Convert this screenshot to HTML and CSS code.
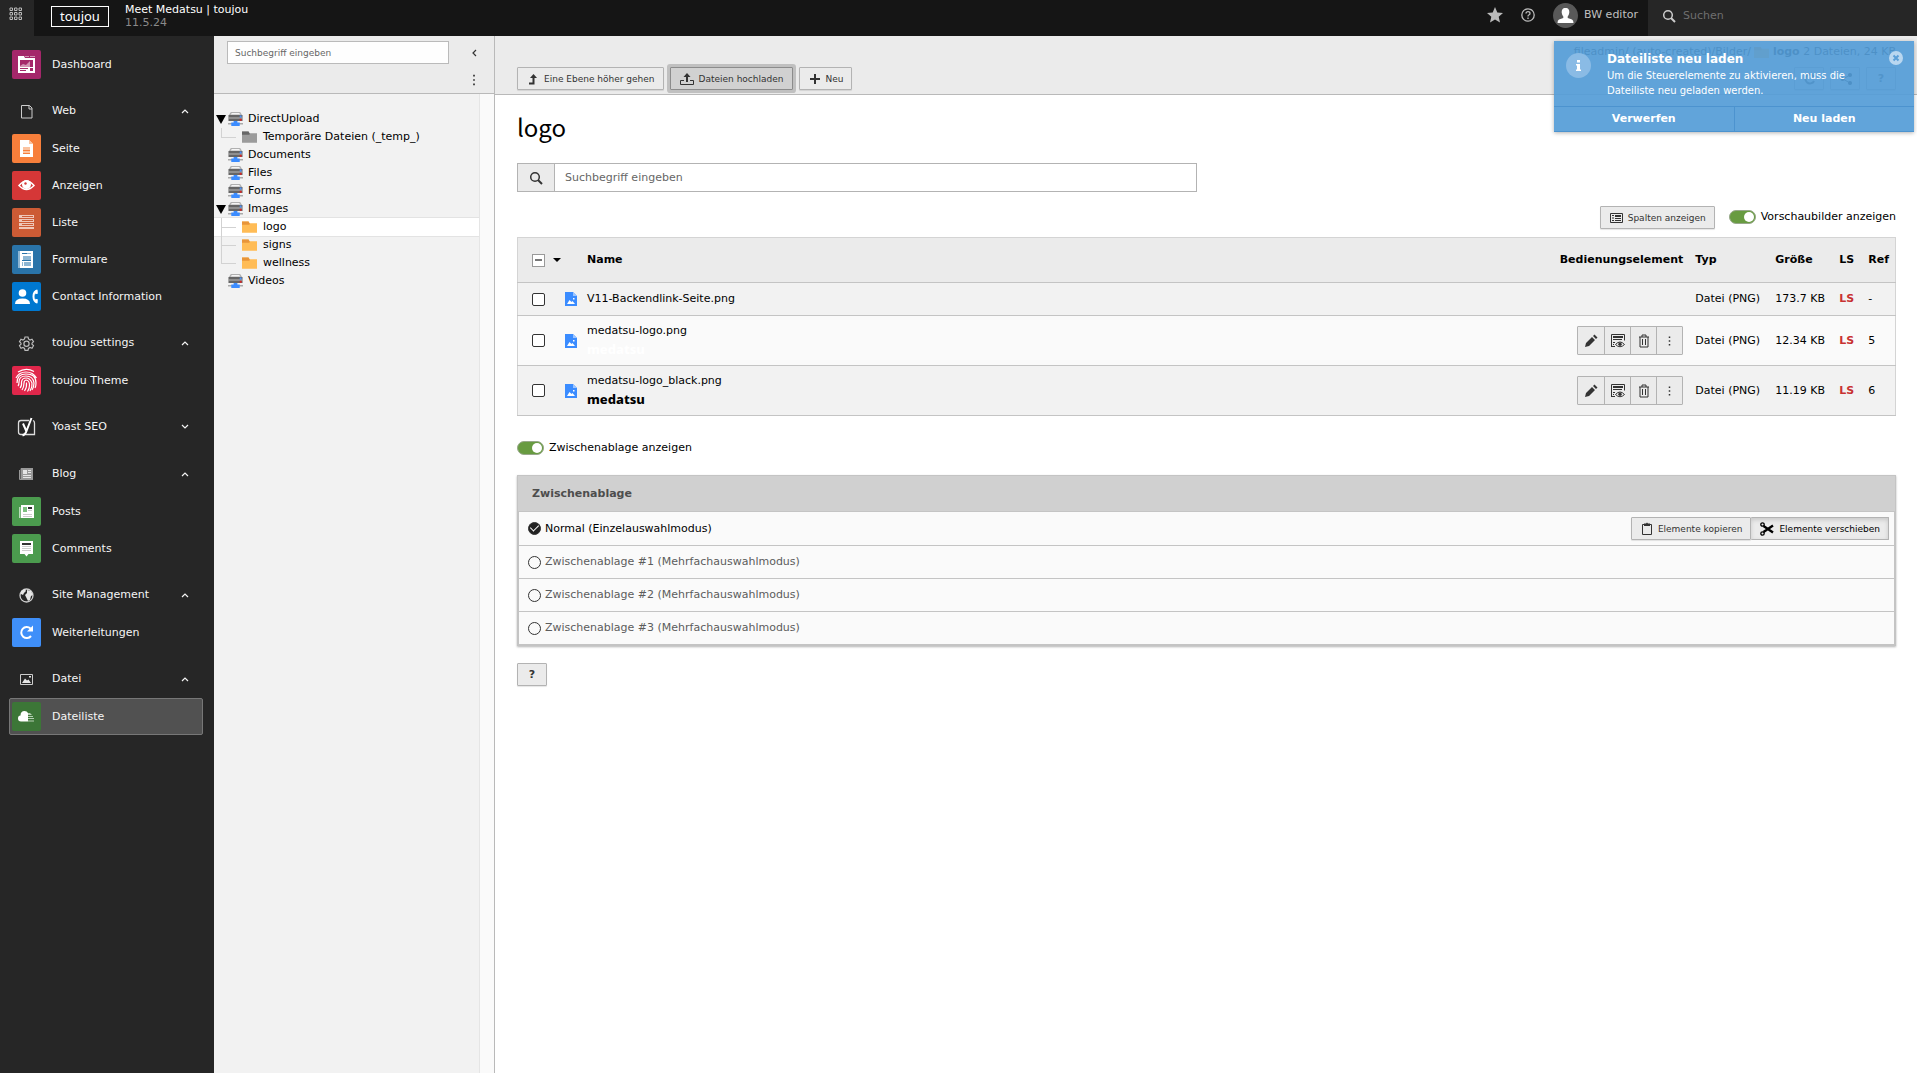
FILE: index.html
```html
<!DOCTYPE html>
<html lang="de">
<head>
    <meta charset="UTF-8">
    <meta name="viewport" content="width=device-width, initial-scale=1.0">
    <title>Meet Medatsu | toujou</title>
    <link rel="stylesheet" href="styles.css">
</head>
<body>
    <!-- Icons used more than once -->
    <svg class="sprite" aria-hidden="true">
        <symbol id="chevron" viewBox="0 0 8 8"><path d="M1 6l3-3 3 3" fill="none" stroke="currentColor" stroke-width="1.2"/></symbol>
        <symbol id="mount" viewBox="0 0 16 14" preserveAspectRatio="none">
            <path d="M3 0h10l2 3H1z" fill="#b0b0b0"/><path d="M4 1h8l1 1.500H3z" fill="#f5f5f5"/>
            <path d="M.5 3h15v6H.5z" fill="#666"/><path d="M.5 5.500h15v1H.5z" fill="#bbb"/>
            <path d="M12.500 3.500h2v2h-2z" fill="#4b93ff"/><path d="M12.500 6.800h2v2h-2z" fill="#d22"/>
            <path d="M0 11h16v1.500H0z" fill="#aaa"/><path d="M6 9h4v1.500h2.500V14h-9v-3.500H6z" fill="#3b8cff"/>
        </symbol>
        <symbol id="folder" viewBox="0 0 16 14">
            <path d="M0 1h7l1 2h8v10H0z" fill="#ffbc56"/><path d="M0 1h7l1 2v1.500H0z" fill="#e8953a"/>
        </symbol>
        <symbol id="folder-temp" viewBox="0 0 16 14">
            <path d="M0 1h7l1 2h8v10H0z" fill="#9b9b9b"/><path d="M0 1h7l1 2v1.500H0z" fill="#666"/>
        </symbol>
        <symbol id="image-file" viewBox="0 0 12 14">
            <path d="M0 0h8l4 4v10H0z" fill="#3b8cff"/><path d="M8 0l4 4H8z" fill="#9cc5ff"/>
            <path d="M2 12l2.500-4 2 2 1-1 2.500 3z" fill="#fff"/><path d="M8 6h1.500v1.500H8z" fill="#fff"/>
        </symbol>
        <symbol id="search" viewBox="0 0 14 14"><circle cx="6" cy="6" r="4.300" fill="none" stroke="currentColor" stroke-width="1.500"/><path d="M9 9l4 4" stroke="currentColor" stroke-width="2"/></symbol>
        <symbol id="pencil" viewBox="0 0 14 14"><path d="M1 13l1-4 6-6 3 3-6 6zM9 2l1.500-1.500 3 3L12 5z" fill="currentColor"/></symbol>
        <symbol id="view-page" viewBox="0 0 14 14">
            <path d="M.5 13V.5h13v6M.5 12.500H4" fill="none" stroke="currentColor"/><path d="M2 2h10v2H2zM2 5h9v1H2zM2 8h2v1H2zM2 10h1v1H2z" fill="currentColor"/>
            <path d="M4.500 10.500q4.500-5 9 0-4.500 4.500-9 0z" fill="#eee" stroke="currentColor"/><circle cx="9" cy="10.200" r="1.700" fill="currentColor"/>
        </symbol>
        <symbol id="trash" viewBox="0 0 12 14"><path d="M1 3h10M4 3V1h4v2M2 3v10h8V3M4.500 5v6M7.500 5v6" fill="none" stroke="currentColor"/></symbol>
        <symbol id="dots" viewBox="0 0 4 14"><path d="M1 1h2v2H1zM1 6h2v2H1zM1 11h2v2H1z" fill="currentColor"/></symbol>
    </svg>

    <header class="topbar">
        <button class="topbar-toggle" aria-label="Menü">
            <svg width="14" height="14" viewBox="0 0 14 14"><path d="M1 1h2.500v2.500H1zM5.500 1H8v2.500H5.500zM10 1h2.500v2.500H10zM1 5.500h2.500V8H1zM5.500 5.500H8V8H5.500zM10 5.500h2.500V8H10zM1 10h2.500v2.500H1zM5.500 10H8v2.500H5.500zM10 10h2.500v2.500H10z" fill="none" stroke="#bbb"/></svg>
        </button>
        <a href="#" class="topbar-logo">toujou</a>
        <div class="topbar-site">
            <span>Meet Medatsu | toujou</span>
            <span class="topbar-version">11.5.24</span>
        </div>
        <div class="topbar-tools">
            <button aria-label="Lesezeichen"><svg width="16" height="16" viewBox="0 0 16 16"><path d="M8 0l2.300 5.400 5.700.5-4.300 3.800L13 15.500 8 12.500l-5 3 1.300-5.800L0 5.900l5.700-.5z" fill="#bbb"/></svg></button>
            <button aria-label="Hilfe"><svg width="14" height="14" viewBox="0 0 14 14"><circle cx="7" cy="7" r="6.200" fill="none" stroke="#bbb" stroke-width="1.300"/><path d="M5 5.500Q5 3.700 7 3.700t2 1.700Q9 6.500 7.800 7 7 7.400 7 8.500M7 9.500v1.500" fill="none" stroke="#bbb" stroke-width="1.300"/></svg></button>
            <button class="topbar-user">
                <svg width="25" height="25" viewBox="0 0 25 25"><circle cx="12.500" cy="12.500" r="12.500" fill="#595959"/><path d="M12.500 5c3 0 4 2 3.800 4.500-.2 2-1 3-1.600 4V15l4.300 1.500q1.500.7 1.500 3.500h-16q0-2.800 1.500-3.500l4.300-1.500v-1.500c-.6-1-1.400-2-1.600-4C8.500 7 9.500 5 12.500 5z" fill="#fff"/></svg>
                <span>BW editor</span>
            </button>
        </div>
        <label class="topbar-search">
            <svg width="14" height="14"><use href="#search"/></svg>
            <input type="search" placeholder="Suchen" aria-label="Suchen">
        </label>
    </header>

    <div class="scaffold">
        <nav class="modules">
            <div class="group">
                <a href="#" class="module"><svg class="tile" viewBox="0 0 29 29"><rect width="29" height="29" fill="#a4276a"/><path d="M6 6h6l1 2h10v15H6z" fill="#fff"/><path d="M13 6h4v1h-4zM18 6h5v1h-5z" fill="#d293b4"/><path d="M8 10h13v7H8z" fill="#a4276a"/><path d="M8 16l3-2 3 1 4-4v6H8z" fill="#d293b4"/><path d="M8 18h8v1H8zM8 20h6v1H8zM18 18h3v3h-3z" fill="#a4276a"/></svg>Dashboard</a>
            </div>
            <div class="group">
                <button class="module"><svg class="tile" viewBox="0 0 29 29"><path d="M9.500 8.500h8l2.500 2.500v10H9.500zM17 8.500V12h3" fill="none" stroke="#ccc"/></svg>Web<svg class="chevron"><use href="#chevron"/></svg></button>
                <a href="#" class="module"><svg class="tile" viewBox="0 0 29 29"><rect width="29" height="29" fill="#f77f3b"/><path d="M8 6h9l4 4v13H8z" fill="#fff"/><path d="M17 6l4 4h-4zM11 13h7v7h-7z" fill="#fbc3a0"/><path d="M11 16h7v1h-7zM11 19h7v1h-7z" fill="#f77f3b"/></svg>Seite</a>
                <a href="#" class="module"><svg class="tile" viewBox="0 0 29 29"><rect width="29" height="29" fill="#d53737"/><path d="M7 14.500q7.500-9 15 0-7.500 8-15 0z" fill="none" stroke="#fff" stroke-width="1.500"/><circle cx="14.500" cy="13.500" r="4.500" fill="#fff"/><circle cx="13.500" cy="12.500" r="1.200" fill="#d53737"/></svg>Anzeigen</a>
                <a href="#" class="module"><svg class="tile" viewBox="0 0 29 29"><rect width="29" height="29" fill="#cc5b35"/><path d="M7 7h15v3H7zM7 11h15v3H7zM7 15h15v3H7zM7 19h15v2H7z" fill="#efc7b9"/><path d="M10 8h11v1H10zM10 12h11v1H10zM10 16h11v1H10z" fill="#cc5b35"/></svg>Liste</a>
                <a href="#" class="module"><svg class="tile" viewBox="0 0 29 29"><rect width="29" height="29" fill="#2a74a9"/><path d="M6 6h3v17H6z" fill="#8db6d3"/><path d="M8 6h13v17H8z" fill="#fff"/><path d="M10 8h9v1h-9zM11 11h8v5h-8zM10 17h1v4h-1zM12 17h7v4h-7z" fill="#8db6d3"/><path d="M10 8h5v1h-5zM10 15h9v1h-9z" fill="#2a74a9"/></svg>Formulare</a>
                <a href="#" class="module"><svg class="tile" viewBox="0 0 29 29"><rect width="29" height="29" fill="#0078d0"/><circle cx="10.500" cy="11" r="3.800" fill="#fff"/><path d="M3 22q0-5.500 7.500-5.500T18 22z" fill="#fff"/><path d="M25.500 8.500q-4 1-4 6t4 6" fill="none" stroke="#fff" stroke-width="2"/><path d="M22.500 9l2.500-1.500 1 4-2.500.7zM22.500 20l2.500 1.500 1-4-2.500-.7z" fill="#fff"/></svg>Contact Information</a>
            </div>
            <div class="group">
                <button class="module"><svg class="tile" viewBox="0 0 29 29"><path d="M13 8h3l.5 2 1.500 1 2-.8 1.500 2.500-1.500 1.500v1l1.500 1.500-1.500 2.500-2-.8-1.500 1-.5 2h-3l-.5-2-1.500-1-2 .8-1.500-2.500L9 15.200v-1l-1.500-1.500L9 10.200l2 .8 1.500-1z" fill="none" stroke="#bbb" stroke-width="1.200"/><circle cx="14.500" cy="14.700" r="2.600" fill="none" stroke="#bbb" stroke-width="1.200"/></svg>toujou settings<svg class="chevron"><use href="#chevron"/></svg></button>
                <a href="#" class="module"><svg class="tile" viewBox="0 0 29 29"><rect width="29" height="29" fill="#e0274b"/><g fill="none" stroke="#fff" stroke-width="1.200"><path d="M6 6q8-5 16-.5M4 12Q7 6 14 6t10.500 6M5 17q0-9 9-9 10 0 10 9 0 3-1 5M6 20q1-1 1-4 0-6 7-6t8 7q0 4-2 7M8 22q2-2 1.500-6 .5-4 4.500-4t6 5q.5 4-2 8M10 24q2-3 2-7 0-3 2.500-3 3 1 3 5t-2 6.500M14.500 16.500q.5 5 -2 8.500"/></g></svg>toujou Theme</a>
            </div>
            <div class="group">
                <button class="module"><svg class="tile" viewBox="0 0 29 29"><path d="M17 7.500H9q-2.500 0-2.500 2.500v9q0 2.500 2.500 2.500h13.500V10q0-2-1.500-2.500" fill="none" stroke="#ddd" stroke-width="1.300"/><path d="M11 10.500l3.500 8M19.500 5L14.500 18q-1 3.500-4 4.500" fill="none" stroke="#fff" stroke-width="2"/></svg>Yoast SEO<svg class="chevron chevron-down"><use href="#chevron"/></svg></button>
            </div>
            <div class="group">
                <button class="module"><svg class="tile" viewBox="0 0 29 29"><path d="M7.500 10v9.500h13V8.500H9v11" fill="none" stroke="#999"/><path d="M9 8h12v12H9z" fill="#999"/><path d="M11 10h4v4h-4zM16 10h3v1h-3zM16 12h3v1h-3zM11 15h8v1h-8zM11 17h8v1h-8z" fill="#e5e5e5"/></svg>Blog<svg class="chevron"><use href="#chevron"/></svg></button>
                <a href="#" class="module"><svg class="tile" viewBox="0 0 29 29"><rect width="29" height="29" fill="#4b9b4e"/><path d="M7 10h1.500v11H7z" fill="#b9dbba"/><path d="M9 8h13v13H9z" fill="#fff"/><path d="M11 10h4v5h-4z" fill="#7cc07f"/><path d="M16 10h4v2h-4z" fill="#333"/><path d="M16 13h4v1h-4zM11 17h9v1h-9zM11 19h9v1h-9z" fill="#ccc"/></svg>Posts</a>
                <a href="#" class="module"><svg class="tile" viewBox="0 0 29 29"><rect width="29" height="29" fill="#4b9b4e"/><path d="M8 7h13v13h-4.500l-2 2.500-2-2.500H8z" fill="#fff"/><path d="M10 9h9v2h-9z" fill="#333"/><path d="M10 12h9v1h-9zM10 14h9v1h-9zM10 16h9v1h-9z" fill="#ccc"/></svg>Comments</a>
            </div>
            <div class="group">
                <button class="module"><svg class="tile" viewBox="0 0 29 29"><circle cx="14.500" cy="14.500" r="6.500" fill="none" stroke="#ccc" stroke-width="1.300"/><path d="M9 10l4-2 1 2-2 2-1 2-2-1zM15 9l4 1 2 4-2 1-1 4-2 1-2-4 -1-2 2-2z" fill="#e5e5e5"/></svg>Site Management<svg class="chevron"><use href="#chevron"/></svg></button>
                <a href="#" class="module"><svg class="tile" viewBox="0 0 29 29"><rect width="29" height="29" fill="#3f8ff9"/><path d="M19 18a5.500 5.500 0 1 1-.5-7.500" fill="none" stroke="#fff" stroke-width="2"/><path d="M21 7.500v6h-6z" fill="#fff"/></svg>Weiterleitungen</a>
            </div>
            <div class="group">
                <button class="module"><svg class="tile" viewBox="0 0 29 29"><path d="M8.500 9.500h12v10h-12z" fill="none" stroke="#ccc"/><path d="M10 18l3-4.500 2 2 1.500-1 2.500 3.500zM17 11h2v1.500h-2z" fill="#e5e5e5"/></svg>Datei<svg class="chevron"><use href="#chevron"/></svg></button>
                <a href="#" class="module module-active"><svg class="tile" viewBox="0 0 29 29"><rect width="29" height="29" fill="#3c7637"/><path d="M9 19.500q-3 0-3-3t2.500-3q0-4.500 4-4.500 2.500 0 3.500 2v8.500z" fill="#fff"/><path d="M16 11h2l2 2h-4zM16 14h5v1h-5zM16 16h6v1h-6zM16 18.500h6v1h-6z" fill="#b5ceb3"/></svg>Dateiliste</a>
            </div>
        </nav>

        <aside class="tree">
            <div class="tree-header">
                <div class="tree-row">
                    <input type="text" class="tree-search" placeholder="Suchbegriff eingeben" aria-label="Suchbegriff eingeben">
                    <button class="icon-btn" aria-label="Einklappen"><svg class="chevron chevron-left"><use href="#chevron"/></svg></button>
                </div>
                <button class="icon-btn tree-more" aria-label="Mehr"><svg width="4" height="12"><use href="#dots"/></svg></button>
            </div>
            <ul class="tree-list">
                <li><a href="#" class="node node-open"><svg class="node-icon"><use href="#mount"/></svg>DirectUpload</a>
                    <ul>
                        <li><a href="#" class="node"><svg class="node-icon"><use href="#folder-temp"/></svg>Temporäre Dateien (_temp_)</a></li>
                    </ul>
                </li>
                <li><a href="#" class="node"><svg class="node-icon"><use href="#mount"/></svg>Documents</a></li>
                <li><a href="#" class="node"><svg class="node-icon"><use href="#mount"/></svg>Files</a></li>
                <li><a href="#" class="node"><svg class="node-icon"><use href="#mount"/></svg>Forms</a></li>
                <li><a href="#" class="node node-open"><svg class="node-icon"><use href="#mount"/></svg>Images</a>
                    <ul>
                        <li><a href="#" class="node node-selected"><svg class="node-icon"><use href="#folder"/></svg>logo</a></li>
                        <li><a href="#" class="node"><svg class="node-icon"><use href="#folder"/></svg>signs</a></li>
                        <li><a href="#" class="node"><svg class="node-icon"><use href="#folder"/></svg>wellness</a></li>
                    </ul>
                </li>
                <li><a href="#" class="node"><svg class="node-icon"><use href="#mount"/></svg>Videos</a></li>
            </ul>
        </aside>

        <main class="content">
            <div class="docheader">
                <div class="docheader-path">fileadmin/ (auto-created)/Bilder/ <svg width="15" height="13"><use href="#folder"/></svg> <b>logo</b> 2 Dateien, 24 KB</div>
                <div class="docheader-buttons">
                    <button class="btn"><svg width="12" height="12" viewBox="0 0 12 12"><path d="M2 10.500h4.500V3" fill="none" stroke="currentColor" stroke-width="2"/><path d="M3 5l3.500-4L10 5z" fill="currentColor"/></svg>Eine Ebene höher gehen</button>
                    <button class="btn btn-focus"><svg width="14" height="12" viewBox="0 0 14 12"><path d="M4 7.500H.5v4h13v-4H10" fill="none" stroke="currentColor"/><path d="M6 9V4H3.500L7 0l3.500 4H8v5z" fill="currentColor"/></svg>Dateien hochladen</button>
                    <button class="btn"><svg width="12" height="12" viewBox="0 0 12 12"><path d="M6 1v10M1 6h10" stroke="currentColor" stroke-width="2"/></svg>Neu</button>
                    <div class="docheader-right">
                        <button class="btn" aria-label="Neu laden"><svg width="12" height="12" viewBox="0 0 12 12"><path d="M10 8a4.500 4.500 0 1 1 0-4" fill="none" stroke="currentColor" stroke-width="2"/></svg></button>
                        <button class="btn" aria-label="Teilen"><svg width="12" height="12" viewBox="0 0 12 12"><path d="M10 2L3 6l7 4" fill="none" stroke="currentColor"/><circle cx="10" cy="2" r="2"/><circle cx="2.500" cy="6" r="2"/><circle cx="10" cy="10" r="2"/></svg></button>
                        <button class="btn btn-help">?</button>
                    </div>
                </div>
            </div>

            <div class="body">
                <h1>logo</h1>
                <form class="search">
                    <button type="button" class="search-btn" aria-label="Suchen"><svg width="14" height="14"><use href="#search"/></svg></button>
                    <input type="text" placeholder="Suchbegriff eingeben" aria-label="Suchbegriff eingeben">
                </form>

                <div class="options">
                    <button class="btn"><svg width="13" height="12" viewBox="0 0 13 12"><path d="M.5 1.500h12v9H.5z" fill="none" stroke="currentColor"/><path d="M2 3h2v1H2zM5 3h6v2H5zM2 5.500h2v1H2zM5 6h6v1H5zM2 8h2v1H2zM5 8h6v1H5z" fill="currentColor"/></svg>Spalten anzeigen</button>
                    <label class="toggle"><input type="checkbox" checked>Vorschaubilder anzeigen</label>
                </div>

                <table class="files">
                    <thead>
                        <tr>
                            <th class="col-check"><div class="check-menu"><button class="check-all" aria-label="Auswahl"></button><span class="caret"></span></div></th>
                            <th class="col-icon"></th>
                            <th>Name</th>
                            <th class="col-control">Bedienungselement</th>
                            <th class="col-type">Typ</th>
                            <th class="col-size">Größe</th>
                            <th class="col-ls">LS</th>
                            <th class="col-ref">Ref</th>
                        </tr>
                    </thead>
                    <tbody>
                        <tr>
                            <td class="col-check"><input type="checkbox" class="check" aria-label="V11-Backendlink-Seite.png"></td>
                            <td class="col-icon"><svg width="12" height="14"><use href="#image-file"/></svg></td>
                            <td>V11-Backendlink-Seite.png</td>
                            <td></td>
                            <td>Datei (PNG)</td>
                            <td>173.7 KB</td>
                            <td class="ls">LS</td>
                            <td>-</td>
                        </tr>
                        <tr class="tall">
                            <td class="col-check"><input type="checkbox" class="check" aria-label="medatsu-logo.png"></td>
                            <td class="col-icon"><svg width="12" height="14"><use href="#image-file"/></svg></td>
                            <td><a href="#">medatsu-logo.png</a><span class="thumb thumb-white">medatsu</span></td>
                            <td class="col-control">
                                <div class="btn-group">
                                    <button aria-label="Bearbeiten"><svg width="14" height="14"><use href="#pencil"/></svg></button><button aria-label="Ansehen"><svg width="14" height="14"><use href="#view-page"/></svg></button><button aria-label="Löschen"><svg width="12" height="14"><use href="#trash"/></svg></button><button aria-label="Mehr"><svg width="3" height="12"><use href="#dots"/></svg></button>
                                </div>
                            </td>
                            <td>Datei (PNG)</td>
                            <td>12.34 KB</td>
                            <td class="ls">LS</td>
                            <td>5</td>
                        </tr>
                        <tr class="tall">
                            <td class="col-check"><input type="checkbox" class="check" aria-label="medatsu-logo_black.png"></td>
                            <td class="col-icon"><svg width="12" height="14"><use href="#image-file"/></svg></td>
                            <td><a href="#">medatsu-logo_black.png</a><span class="thumb">medatsu</span></td>
                            <td class="col-control">
                                <div class="btn-group">
                                    <button aria-label="Bearbeiten"><svg width="14" height="14"><use href="#pencil"/></svg></button><button aria-label="Ansehen"><svg width="14" height="14"><use href="#view-page"/></svg></button><button aria-label="Löschen"><svg width="12" height="14"><use href="#trash"/></svg></button><button aria-label="Mehr"><svg width="3" height="12"><use href="#dots"/></svg></button>
                                </div>
                            </td>
                            <td>Datei (PNG)</td>
                            <td>11.19 KB</td>
                            <td class="ls">LS</td>
                            <td>6</td>
                        </tr>
                    </tbody>
                </table>

                <label class="toggle"><input type="checkbox" checked>Zwischenablage anzeigen</label>

                <section class="clipboard">
                    <h2>Zwischenablage</h2>
                    <div class="clip-row clip-row-active">
                        <label><input type="radio" name="clip" checked>Normal (Einzelauswahlmodus)</label>
                        <div class="clip-buttons">
                            <button class="btn"><svg width="12" height="14" viewBox="0 0 12 14"><path d="M1.500 2.500h9v10h-9z" fill="none" stroke="currentColor"/><path d="M3 1.500h2l1-1 1 1h2V4H3z" fill="currentColor"/></svg>Elemente kopieren</button>
                            <button class="btn btn-pressed"><svg width="14" height="14" viewBox="0 0 14 14"><circle cx="2.500" cy="2.500" r="1.700" fill="none" stroke="currentColor" stroke-width="1.300"/><circle cx="2.500" cy="11.500" r="1.700" fill="none" stroke="currentColor" stroke-width="1.300"/><path d="M3.500 4l9.500 6.500M3.500 10L13 3.500" stroke="currentColor" stroke-width="2.400"/></svg>Elemente verschieben</button>
                        </div>
                    </div>
                    <div class="clip-row"><label><input type="radio" name="clip">Zwischenablage #1 (Mehrfachauswahlmodus)</label></div>
                    <div class="clip-row"><label><input type="radio" name="clip">Zwischenablage #2 (Mehrfachauswahlmodus)</label></div>
                    <div class="clip-row"><label><input type="radio" name="clip">Zwischenablage #3 (Mehrfachauswahlmodus)</label></div>
                </section>

                <button class="btn btn-help">?</button>
            </div>
        </main>
    </div>

    <div class="notification" role="alert">
        <div class="notification-body">
            <svg width="25" height="25" viewBox="0 0 25 25"><circle cx="12.500" cy="12.500" r="12.500" fill="#8abbe5"/><path d="M11 7h3v2.500h-3zM10 11h4v5.500h1V18h-5v-1.500h1v-4h-1z" fill="#fff"/></svg>
            <div>
                <strong>Dateiliste neu laden</strong>
                <p>Um die Steuerelemente zu aktivieren, muss die Dateiliste neu geladen werden.</p>
            </div>
            <button class="notification-close" aria-label="Schließen"><svg width="14" height="14" viewBox="0 0 14 14"><circle cx="7" cy="7" r="7" fill="#b9d7f0"/><path d="M4.500 4.500l5 5M9.500 4.500l-5 5" stroke="#5a9fd8" stroke-width="2"/></svg></button>
        </div>
        <div class="notification-actions">
            <button>Verwerfen</button>
            <button>Neu laden</button>
        </div>
    </div>
</body>
</html>
```

FILE: styles.css
```css
*,
*::before,
*::after {
    box-sizing: border-box;
}

body {
    margin: 0;
    height: 100vh;
    display: flex;
    flex-direction: column;
    font-family: Verdana, "DejaVu Sans", sans-serif;
    font-size: 11px;
    line-height: 16px;
    color: #000;
    background: #fff;
}

button,
input {
    font: inherit;
    color: inherit;
    margin: 0;
}

button {
    padding: 0;
    border: 0;
    background: none;
    cursor: pointer;
}

a {
    color: inherit;
    text-decoration: none;
}

svg {
    flex: none;
}

input::placeholder {
    color: #666;
    opacity: 1;
}

.sprite {
    position: absolute;
    width: 0;
    height: 0;
}

.chevron {
    width: 8px;
    height: 8px;
}

.chevron-down {
    transform: rotate(180deg);
}

.chevron-left {
    transform: rotate(-90deg);
}

/* Topbar */
.topbar {
    flex: none;
    display: flex;
    height: 36px;
    color: #fff;
    background: #151515;
}

.topbar-toggle {
    width: 34px;
    padding: 0 2px 4px 0;
    background: #262626;
}

.topbar-logo {
    width: 58px;
    height: 21px;
    margin: 6px 16px 0 17px;
    border: 1px solid #fff;
    font-family: "Noto Sans", sans-serif;
    font-size: 13px;
    line-height: 18px;
    text-align: center;
}

.topbar-site {
    display: flex;
    flex-direction: column;
    padding-top: 3px;
    line-height: 13px;
}

.topbar-version {
    color: #8a8a8a;
}

.topbar-tools {
    display: flex;
    align-items: center;
    gap: 18px;
    margin-left: auto;
    padding: 0 10px 6px 0;
    color: #c0c0c0;
}

.topbar-tools button,
.topbar-search {
    display: flex;
    align-items: center;
}

.topbar-user {
    gap: 6px;
}

.topbar-search {
    width: 269px;
    padding: 0 0 5px 14px;
    gap: 7px;
    color: #ccc;
    background: #262626;
}

.topbar-search input {
    width: 100%;
    border: 0;
    padding: 0;
    background: none;
}

.topbar-search input::placeholder {
    color: #6f6f6f;
}

.scaffold {
    flex: 1;
    display: flex;
    min-height: 0;
}

/* Module menu */
.modules {
    flex: none;
    width: 214px;
    padding: 10px 11px 0 9px;
    color: #f5f5f5;
    background: #262626;
}

.group {
    margin-bottom: 9px;
}

.module {
    display: flex;
    align-items: center;
    width: 100%;
    height: 37px;
    gap: 11px;
    padding: 0 13px 0 2px;
    border: 1px solid transparent;
    border-radius: 2px;
    text-align: left;
}

button.module {
    height: 38px;
}

.module-active {
    border-color: #777;
    background: #515151;
}

.module .chevron {
    margin-left: auto;
}

.tile {
    width: 29px;
    height: 29px;
    border-radius: 2px;
}

/* File tree */
.tree {
    flex: none;
    display: flex;
    flex-direction: column;
    width: 281px;
    border-right: 1px solid #b9b9b9;
    background: #fafafa;
}

.tree-header {
    display: flex;
    flex-direction: column;
    align-items: flex-end;
    gap: 10px;
    height: 58px;
    padding: 5px 10px 0 13px;
    border-bottom: 1px solid #b9b9b9;
    background: #ebebeb;
}

.tree-row {
    display: flex;
    align-items: center;
    justify-content: space-between;
    width: 100%;
}

.tree-search {
    width: 222px;
    height: 23px;
    padding: 0 7px;
    border: 1px solid #bababa;
    font-size: 9px;
    background: #fefefe;
}

.icon-btn {
    display: flex;
    align-items: center;
    justify-content: center;
    width: 20px;
    color: #333;
}

.tree-list {
    flex: 1;
    margin: 0 14px 0 0;
    padding: 16px 0 0;
    border-right: 1px solid #e5e5e5;
    list-style: none;
    background: #f2f2f2;
}

.tree-list ul {
    margin: 0;
    padding: 0;
    list-style: none;
}

.node {
    display: flex;
    align-items: center;
    gap: 5px;
    height: 18px;
    padding-left: 14px;
}

.node-icon {
    width: 15px;
    height: 14px;
}

.node-open {
    padding-left: 2px;
}

.node-open::before {
    content: "";
    width: 10px;
    margin-right: -3px;
    border-top: 9px solid #000;
    border-left: 5px solid transparent;
    border-right: 5px solid transparent;
}

/* Connector lines for child nodes */
.tree-list ul .node {
    gap: 6px;
    padding-left: 7px;
}

.tree-list ul .node::before {
    content: "";
    width: 15px;
    height: 18px;
    background: linear-gradient(#d2d2d2, #d2d2d2) 0 0 / 1px 100% no-repeat, linear-gradient(#d2d2d2, #d2d2d2) 0 50% / 100% 1px no-repeat;
}

.tree-list ul li:last-child .node::before {
    background-size: 1px 50%, 100% 1px;
}

.tree-list .node-selected {
    background: #fff;
    box-shadow: 0 1px 0 #e3e3e3, 0 -1px 0 #e3e3e3;
}

/* Content */
.content {
    flex: 1;
    min-width: 0;
}

.docheader {
    height: 59px;
    padding: 8px 21px 0 22px;
    border-bottom: 1px solid #b9b9b9;
    background: #ebebeb;
}

.docheader-path {
    height: 23px;
    text-align: right;
}

.docheader-path svg {
    vertical-align: middle;
}

.docheader-buttons {
    display: flex;
    gap: 6px;
}

.docheader-right {
    display: flex;
    gap: 6px;
    margin-left: auto;
}

.docheader-right .btn {
    width: 30px;
}

.btn {
    display: inline-flex;
    align-items: center;
    justify-content: center;
    height: 23px;
    padding: 0 8px 0 9px;
    gap: 5px;
    border: 1px solid #b3b3b3;
    border-radius: 1px;
    font-size: 9px;
    color: #333;
    background: #ebebeb;
    box-shadow: 0 1px 1px rgba(0, 0, 0, 0.1);
}

.btn-focus {
    border-color: #8c8c8c;
    background: #d1d1d1;
    box-shadow: 0 0 0 3px #c0c0c0;
}

.btn-help {
    width: 30px;
    padding: 0;
    font-size: 11px;
    font-weight: bold;
}

.btn-pressed {
    color: #000;
    box-shadow: inset 0 2px 4px rgba(0, 0, 0, 0.15);
}

.body {
    padding: 17px 21px 0 22px;
}

h1 {
    margin: 0 0 21px;
    font-family: "Noto Sans CJK SC", sans-serif;
    font-size: 24px;
    font-weight: 400;
    line-height: 30px;
}

.search {
    display: flex;
    width: 100%;
    max-width: 680px;
    height: 29px;
    margin-bottom: 14px;
    border: 1px solid #b3b3b3;
}

.search-btn {
    display: flex;
    align-items: center;
    justify-content: center;
    width: 37px;
    border-right: 1px solid #b3b3b3;
    color: #333;
    background: #ebebeb;
}

.search input {
    flex: 1;
    padding: 0 10px;
    border: 0;
}

.options {
    display: flex;
    justify-content: flex-end;
    gap: 14px;
    margin-bottom: 8px;
}

.toggle {
    display: flex;
    align-items: center;
    gap: 5px;
    height: 21px;
}

.toggle input {
    appearance: none;
    display: flex;
    justify-content: flex-end;
    width: 27px;
    height: 14px;
    padding: 1px;
    border: 1px solid #98a88b;
    border-radius: 7px;
    background: #689b41;
}

.toggle input::after {
    content: "";
    width: 10px;
    height: 10px;
    border-radius: 50%;
    background: #fff;
}

/* File list */
.files {
    width: 100%;
    margin-bottom: 21px;
    border: 1px solid #d4d4d4;
    border-collapse: collapse;
    text-align: left;
    white-space: nowrap;
}

.files th,
.files td {
    height: 33px;
    padding: 0 6px;
    border-bottom: 1px solid #c4c4c4;
}

.files th {
    height: 45px;
    background: #ebebeb;
}

.files td {
    background: #f2f2f2;
}

.files .tall td {
    height: 50px;
}

.files tr:nth-child(2) td {
    background: #fafafa;
}

.files .col-check {
    width: 43px;
    padding: 0 0 0 14px;
}

.files .col-icon {
    width: 20px;
    padding-right: 4px;
    padding-left: 4px;
}

.files .col-icon svg {
    display: block;
}

.files .col-control {
    width: 132px;
    text-align: right;
}

.files .col-type {
    width: 80px;
}

.files .col-size {
    width: 64px;
}

.files .col-ls {
    width: 29px;
}

.files .col-ref {
    width: 33px;
}

.files .ls {
    font-weight: bold;
    color: #c83232;
}

.check {
    appearance: none;
    display: block;
    width: 13px;
    height: 13px;
    border: 1px solid #333;
    border-radius: 2px;
    background: #fff;
}

.check-menu {
    display: flex;
    align-items: center;
    gap: 8px;
}

.check-all {
    flex: none;
    display: flex;
    align-items: center;
    justify-content: center;
    width: 13px;
    height: 13px;
    border: 1px solid #999;
    background: #fff;
}

.check-all::after {
    content: "";
    width: 7px;
    height: 2px;
    background: #777;
}

.caret {
    border-top: 4px solid #000;
    border-left: 4px solid transparent;
    border-right: 4px solid transparent;
}

.thumb {
    display: block;
    height: 20px;
    font-family: "Noto Sans", sans-serif;
    font-size: 13px;
    font-weight: 800;
    line-height: 20px;
}

.thumb-white {
    color: #fff;
}

.btn-group {
    display: inline-flex;
    border: 1px solid #b3b3b3;
    border-radius: 1px;
    vertical-align: middle;
}

.btn-group button {
    display: flex;
    align-items: center;
    justify-content: center;
    width: 26px;
    height: 27px;
    color: #333;
    background: #ebebeb;
}

.btn-group button + button {
    border-left: 1px solid #b3b3b3;
}

/* Clipboard */
.clipboard {
    margin: 17px 0;
    border: 1px solid #c4c4c4;
    box-shadow: 0 1px 2px rgba(0, 0, 0, 0.3);
}

.clipboard h2 {
    margin: 0;
    padding: 9px 14px;
    font-size: 11px;
    line-height: 17px;
    color: #4d4d4d;
    background: #d0d0d0;
}

.clip-row {
    display: flex;
    align-items: center;
    justify-content: space-between;
    min-height: 33px;
    padding: 0 5px 0 9px;
    border: 1px solid #c4c4c4;
    border-bottom: 0;
    color: #5c5c5c;
    background: #fafafa;
}

.clip-row:last-child {
    min-height: 34px;
    border-bottom: 1px solid #c4c4c4;
}

.clip-row-active {
    min-height: 34px;
    color: #000;
}

.clip-row label {
    display: flex;
    align-items: center;
    gap: 4px;
}

.clip-row input {
    appearance: none;
    width: 13px;
    height: 13px;
    border: 1px solid #333;
    border-radius: 50%;
}

.clip-row input:checked {
    display: flex;
    justify-content: center;
    background: #222;
}

.clip-row input:checked::after {
    content: "";
    width: 5px;
    height: 8px;
    border: solid #fff;
    border-width: 0 1px 1px 0;
    transform: rotate(45deg);
}

.clip-buttons {
    display: flex;
}

.clip-buttons .btn-pressed {
    border-left: 0;
}

/* Notification */
.notification {
    position: absolute;
    top: 41px;
    right: 3px;
    width: 360px;
    color: #fff;
    background: rgba(84, 156, 215, 0.92);
    border-bottom: 1px solid #4c93cf;
    box-shadow: 0 1px 4px rgba(0, 0, 0, 0.3);
}

.notification-body {
    display: flex;
    gap: 16px;
    padding: 10px 11px 8px 12px;
    font-size: 10px;
    line-height: 15px;
}

.notification-body > svg {
    margin-top: 2px;
}

.notification strong {
    display: block;
    font-size: 12px;
    line-height: 17px;
}

.notification p {
    margin: 0;
}

.notification-close {
    align-self: flex-start;
    display: flex;
    margin-left: auto;
}

.notification-actions {
    display: flex;
    border-top: 1px solid #4c93cf;
}

.notification-actions button {
    flex: 1;
    height: 24px;
    font-weight: bold;
}

.notification-actions button + button {
    border-left: 1px solid #4c93cf;
}
```
